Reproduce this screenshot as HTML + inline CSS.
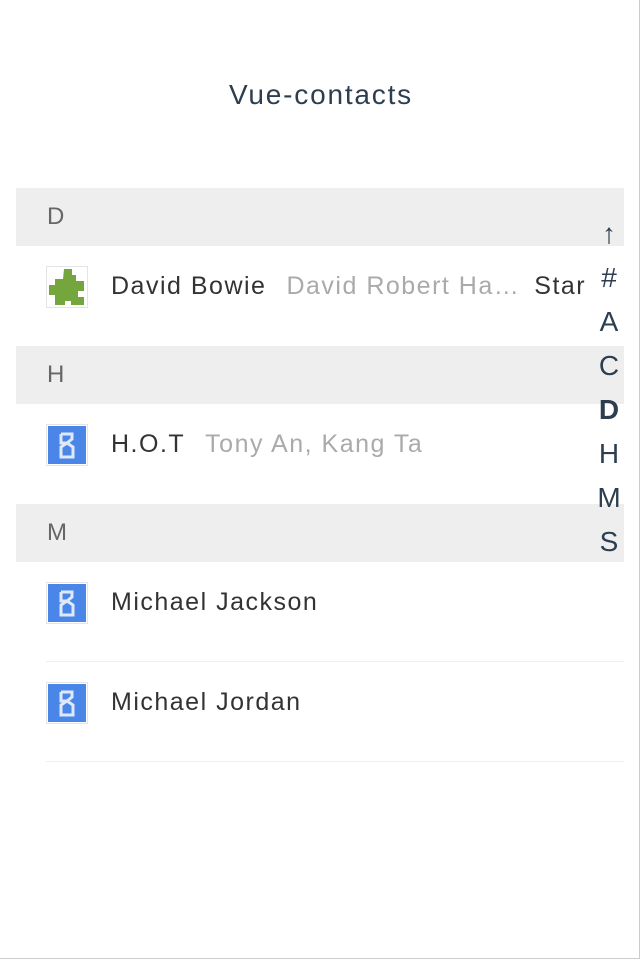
<!DOCTYPE html>
<html><head><meta charset="utf-8"><style>
body{margin:0;width:642px;height:960px;background:#fff;font-family:"Liberation Sans",sans-serif;position:relative;overflow:hidden}
.frame{position:absolute;left:0;top:0;width:639px;height:958px;border-right:1px solid #ccc;border-bottom:1px solid #ccc}
.title{position:absolute;top:79px;left:0;width:642px;text-align:center;font-size:28px;color:#2c3e50;letter-spacing:1.8px}
.hd{position:absolute;left:16px;width:608px;height:58px;background:#eee;color:#666;font-size:24px;line-height:58px;text-indent:31px}
.row{position:absolute;left:46px;width:578px;height:99px;}
.row.b{border-bottom:1px solid #eee}
.ic{position:absolute;left:0;top:20px;width:42px;height:42px;border:1px solid #e4e4e4;box-sizing:border-box;background:#fff}
.nm{position:absolute;left:65px;top:26px;font-size:25px;color:#333;white-space:nowrap;letter-spacing:1.5px}
.nm span{color:#aaa;margin-left:20px}
.idx{position:absolute;left:590px;top:212px;width:38px;text-align:center;font-size:28px;color:#2c3e50;line-height:44px}
</style></head><body>
<div class="frame"></div>
<div class="title">Vue-contacts</div>
<div class="hd" style="top:188px">D</div>
<div class="row" style="top:246px">
 <div class="ic"><svg width="40" height="40" viewBox="0 0 40 40"><path fill="#75a63e" d="M17 2h8v6h4v6h8v10h-6v6h6v8H24v-4h-6v4H8V28H2V18h6v-6h8z"/></svg></div>
 <div class="nm">David Bowie<span>David Robert Ha…</span><span style="color:#333;margin-left:14px">Star</span></div>
</div>
<div class="hd" style="top:346px">H</div>
<div class="row" style="top:404px">
 <div class="ic"><svg width="40" height="40" viewBox="0 0 40 40"><rect x="1" y="1" width="38" height="38" fill="#4a86e8"/><path fill="none" stroke="#dfe9fb" stroke-width="3" d="M14 9h11v5l-5 4h-6v-9M20 18l6 4v10H14V22z"/></svg></div>
 <div class="nm">H.O.T<span>Tony An, Kang Ta</span></div>
</div>
<div class="hd" style="top:504px">M</div>
<div class="row b" style="top:562px">
 <div class="ic"><svg width="40" height="40" viewBox="0 0 40 40"><rect x="1" y="1" width="38" height="38" fill="#4a86e8"/><path fill="none" stroke="#dfe9fb" stroke-width="3" d="M14 9h11v5l-5 4h-6v-9M20 18l6 4v10H14V22z"/></svg></div>
 <div class="nm">Michael Jackson</div>
</div>
<div class="row b" style="top:662px">
 <div class="ic"><svg width="40" height="40" viewBox="0 0 40 40"><rect x="1" y="1" width="38" height="38" fill="#4a86e8"/><path fill="none" stroke="#dfe9fb" stroke-width="3" d="M14 9h11v5l-5 4h-6v-9M20 18l6 4v10H14V22z"/></svg></div>
 <div class="nm">Michael Jordan</div>
</div>
<div class="idx">↑<br>#<br>A<br>C<br><b>D</b><br>H<br>M<br>S</div>
</body></html>
